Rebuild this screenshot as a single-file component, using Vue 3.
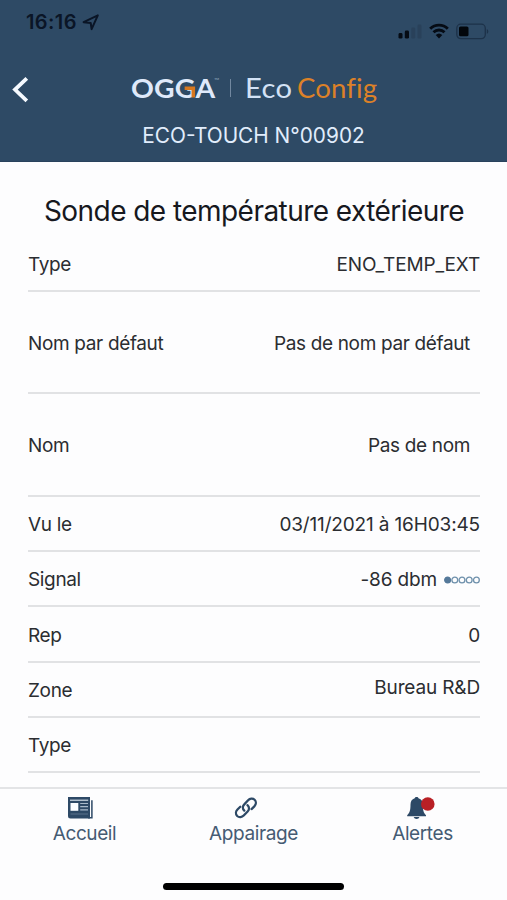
<template>
  <div class="screen">
    <header class="header">
      <div class="status-bar">
        <div class="clock">
          <span class="time">16:16</span>
          <svg class="location" viewBox="0 0 18 17">
            <path d="M1.6 8.2 15.8 1.4 9.6 15.2 8.7 8.9Z" fill="none" stroke="#0a1526" stroke-width="2" stroke-linejoin="round" />
          </svg>
        </div>
        <div class="status-icons">
          <svg width="24" height="17" viewBox="0 0 24 17">
            <rect x="0.5" y="10" width="4" height="5.6" rx="1.4" fill="#050b14" />
            <rect x="6.8" y="7.5" width="4.2" height="8.1" rx="1.4" fill="#050b14" />
            <rect x="13.3" y="4.5" width="4" height="11.1" rx="1.4" fill="#29415a" />
            <rect x="19.5" y="1.5" width="4" height="14.1" rx="1.4" fill="#29415a" />
          </svg>
          <svg width="20" height="16" viewBox="0 0 20 16">
            <path d="M1.2 5.8a12.4 12.4 0 0 1 17.6 0M4.5 9.2a7.9 7.9 0 0 1 11 0" fill="none" stroke="#050b14" stroke-width="2.9" />
            <path d="M6.7 12a4.8 4.8 0 0 1 6.6 0L10 15.4Z" fill="#050b14" />
          </svg>
          <svg width="33" height="17" viewBox="0 0 33 17">
            <rect x="0.8" y="1.2" width="28.5" height="14.4" rx="4" fill="none" stroke="#1d3249" stroke-width="1.3" />
            <rect x="3" y="3.5" width="9.5" height="9.8" rx="1.6" fill="#02060b" />
            <path d="M30.8 6c2 .8 2 4 0 4.8Z" fill="#1d3249" />
          </svg>
        </div>
      </div>
      <div class="brand-row">
        <button class="back" aria-label="Retour">
          <svg width="19" height="27" viewBox="0 0 19 27">
            <path d="M15.8 2.4 4 13.6 15.8 24.8" fill="none" stroke="#f6faff" stroke-width="3.8" />
          </svg>
        </button>
        <div class="brand">
          <span class="logo">OG<span class="logo-g">G<svg class="corner" viewBox="0 0 11 12"><path d="M0 0H11V12H7.2V3.8H0Z" fill="#d8781f" /></svg></span>A</span>
          <span class="tm">™</span>
          <span class="divider"></span>
          <span class="eco">Eco</span>
          <span class="config">Config</span>
        </div>
      </div>
      <div class="device">ECO-TOUCH N°00902</div>
    </header>

    <main class="content">
      <h1 class="title">Sonde de température extérieure</h1>
      <div
        v-for="(row, index) in rows"
        :key="index"
        class="row"
        :class="{ tall: row.tall, raised: row.raised }"
      >
        <span class="label">{{ row.label }}</span>
        <span class="value" :class="{ code: row.code }">
          {{ row.value }}
          <svg v-if="row.signal" class="dots" viewBox="0 0 36 8">
            <circle
              v-for="n in 5"
              :key="n"
              class="dot"
              :class="{ on: n <= row.signal }"
              :cx="n * 7.2 - 3.6"
              cy="4"
              r="2.9"
            />
          </svg>
        </span>
      </div>
    </main>

    <nav class="tabs">
      <a class="tab">
        <svg width="25" height="22" viewBox="0 0 25 22">
          <path d="M0 0H22V21.5H2.5Q0 21.5 0 19Z" fill="#2d4966" />
          <path d="M2 3.2H20.2" stroke="#dfe8f1" stroke-width="1.1" />
          <rect x="2.5" y="6" width="7.8" height="7.8" fill="#fbfdff" />
          <path d="M12.2 6.5H20M12.2 9.6H20M12.2 12.9H20" stroke="#a9bacb" stroke-width="1.1" />
          <path d="M2.5 17H20" stroke="#5a728b" stroke-width="1" />
          <path d="M23.9 3.2V20.8H20" fill="none" stroke="#2d4966" stroke-width="1.5" />
        </svg>
        <span>Accueil</span>
      </a>
      <a class="tab appairage">
        <svg width="24" height="23" viewBox="0 0 24 23">
          <g fill="none" stroke="#2d4966" stroke-width="2.4" stroke-linecap="round">
            <path d="M10.2 14.2C7.9 12 8.5 9.4 10.2 7.7L14.2 3.4C16 1.5 19 1 21 2.9C23 4.9 22.5 7.9 20.7 9.8L17.8 12.6" />
            <path d="M13.5 8.6C15.9 10.7 15.4 13.4 13.7 15.1L9.6 19.4C7.8 21.3 4.8 21.8 2.8 19.9C.8 17.9 1.3 14.9 3.1 13L6 10.2" />
          </g>
        </svg>
        <span>Appairage</span>
      </a>
      <a class="tab alertes">
        <svg width="28" height="22" viewBox="0 0 28 22">
          <path d="M9.6 0C10.6 0 11.3.5 11.5 1.2C14.6 2 15.8 4.5 15.8 7.5C15.8 13 16.5 15.8 19 18.2V19.2H.2V18.2C2.8 15.8 3.5 13 3.5 7.5C3.5 4.5 4.8 2 7.7 1.2C8 .5 8.6 0 9.6 0Z" fill="#2d4966" />
          <path d="M6.6 20H12.5Q11.8 22 9.6 22Q7.4 22 6.6 20Z" fill="#2d4966" />
          <circle cx="20.8" cy="7" r="6.8" fill="#b92025" />
        </svg>
        <span>Alertes</span>
      </a>
    </nav>
    <div class="home-indicator"></div>
  </div>
</template>

<script setup>
import { ref } from 'vue'

const rows = ref([
  { label: 'Type', value: 'ENO_TEMP_EXT', code: true },
  { label: 'Nom par défaut', value: 'Pas de nom par défaut', tall: true },
  { label: 'Nom', value: 'Pas de nom', tall: true },
  { label: 'Vu le', value: '03/11/2021 à 16H03:45', code: true },
  { label: 'Signal', value: '-86 dbm', signal: 1, code: true },
  { label: 'Rep', value: '0' },
  { label: 'Zone', value: 'Bureau R&D', raised: true, code: true },
  { label: 'Type', value: '' }
])
</script>

<style>
body {
  margin: 0;
  background: #fdfdfe;
}
</style>

<style scoped>
.screen {
  width: 507px;
  height: 900px;
  display: flex;
  flex-direction: column;
  overflow: hidden;
  background: #fdfdfe;
  font-family: Inter, "Liberation Sans", sans-serif;
}

.header {
  height: 162px;
  flex: none;
  box-sizing: border-box;
  background: #2e4a65;
  border-bottom: 1px solid #29425c;
}

.status-bar {
  height: 64px;
  display: flex;
  justify-content: space-between;
  box-sizing: border-box;
  padding: 9px 18px 0 26px;
}

.clock {
  height: 26px;
  display: flex;
  align-items: center;
  gap: 5px;
}

.time {
  font-size: 20px;
  font-weight: 600;
  letter-spacing: 0.4px;
  color: #0a1526;
}

.location {
  width: 18px;
  height: 17px;
}

.status-icons {
  height: 17px;
  margin-top: 14px;
  display: flex;
  gap: 7px;
}

.brand-row {
  height: 52px;
  display: flex;
}

.back {
  border: 0;
  width: 131px;
  background: none;
  display: flex;
  align-items: flex-start;
  padding: 12px 0 0 11px;
}

.brand {
  height: 48px;
  display: flex;
  align-items: center;
  font-family: Lato, sans-serif;
  font-size: 26px;
  white-space: nowrap;
}

.logo {
  width: 83px;
  color: #dfe9fa;
  font-weight: 700;
  letter-spacing: 0.1px;
  transform: scaleX(1.09);
  transform-origin: left center;
}

.logo-g {
  position: relative;
}

.corner {
  position: absolute;
  right: 0;
  bottom: 6px;
  width: 10px;
  height: 12px;
}

.tm {
  width: 16px;
  font-size: 7px;
  color: #8b9fb5;
  align-self: flex-start;
  margin-top: 12px;
}

.divider {
  width: 1px;
  height: 18px;
  margin-right: 14px;
  background: #7288a0;
}

.eco {
  width: 52px;
  letter-spacing: 0.3px;
  color: #d3e2f5;
  transform: scaleX(1.12);
  transform-origin: left center;
}

.config {
  letter-spacing: 0.1px;
  color: #dc8128;
  transform: scaleX(1.06);
  transform-origin: left center;
}

.device {
  height: 38px;
  line-height: 39px;
  text-align: center;
  font-size: 20.8px;
  color: #e1edfc;
}

.content {
  flex: none;
  height: 624.5px;
  overflow: hidden;
  padding: 0 27px 0 28px;
}

.title {
  margin: 0;
  height: 74.5px;
  box-sizing: border-box;
  padding-top: 30px;
  line-height: 38px;
  text-align: center;
  font-size: 28px;
  font-weight: 400;
  letter-spacing: -0.55px;
  color: #16181e;
  white-space: nowrap;
}

.row {
  height: 55.3px;
  box-sizing: border-box;
  border-bottom: 2px solid #e1e2e4;
  padding-top: 2px;
  display: flex;
  align-items: center;
  justify-content: space-between;
  font-size: 19px;
  letter-spacing: -0.35px;
  color: #2b2d31;
  white-space: nowrap;
}

.row.tall {
  height: 102.5px;
}

.row.tall .value {
  margin-right: 10px;
}

.row.raised .value {
  padding-bottom: 5px;
}

.value {
  display: flex;
  align-items: center;
  gap: 7px;
}

.value.code {
  letter-spacing: -0.15px;
}

.dots {
  width: 36px;
  height: 8px;
}

.dot {
  fill: none;
  stroke: #6f91ac;
  stroke-width: 1.3;
}

.dot.on {
  fill: #55799a;
  stroke: #55799a;
}

.tabs {
  flex: none;
  height: 96px;
  box-sizing: border-box;
  border-top: 2px solid #e3e4e6;
  display: flex;
  padding-top: 8px;
}

.tab {
  width: 169px;
  display: flex;
  flex-direction: column;
  align-items: center;
  gap: 3px;
  font-size: 19px;
  line-height: 24px;
  letter-spacing: -0.4px;
  color: #455b73;
}

.tab svg {
  height: 22px;
  margin-right: 8px;
}

.tab.appairage svg {
  margin-right: 15px;
}

.tab.alertes svg {
  margin-right: 3px;
}

.home-indicator {
  width: 181px;
  height: 7px;
  margin: 0 auto;
  border-radius: 4px;
  background: #000;
}
</style>
